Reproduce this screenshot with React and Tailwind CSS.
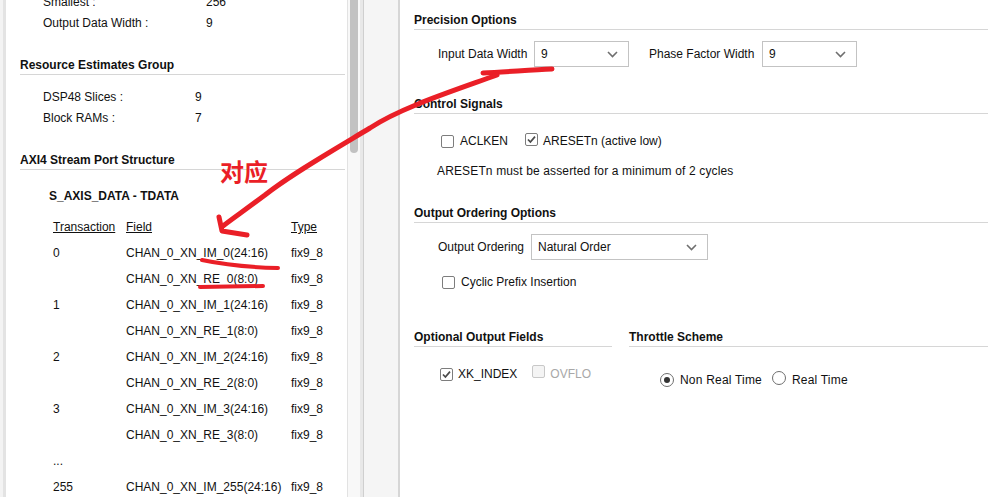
import React from "react";

const font = { fontFamily: '"Liberation Sans", Arial, sans-serif' };

function Check({ checked, disabled }) {
  return (
    <span
      className={
        "inline-flex items-center justify-center w-[13px] h-[13px] rounded-[2px] border shrink-0 " +
        (disabled ? "border-[#c8c8c8] bg-[#f4f4f4]" : "border-[#7d7d7d] bg-white")
      }
    >
      {checked && (
        <svg width="11" height="11" viewBox="0 0 11 11">
          <path d="M2 5.5 L4.4 8 L9 2.6" fill="none" stroke="#4a4a4a" strokeWidth="1.7" />
        </svg>
      )}
    </span>
  );
}

function Radio({ checked }) {
  return (
    <span className="inline-flex items-center justify-center w-[14px] h-[14px] rounded-full border border-[#6e6e6e] bg-white shrink-0">
      {checked && <span className="w-[6px] h-[6px] rounded-full bg-[#333]" />}
    </span>
  );
}

function Chevron() {
  return (
    <svg width="11" height="7" viewBox="0 0 11 7">
      <path d="M1 1 L5.5 5.5 L10 1" fill="none" stroke="#6f6f6f" strokeWidth="1.6" />
    </svg>
  );
}

function Select({ value, w }) {
  return (
    <div
      className={
        "h-[26px] border border-[#c3c3c3] bg-white flex items-center justify-between pl-[6px] pr-[10px] " + w
      }
    >
      <span>{value}</span>
      <Chevron />
    </div>
  );
}

function SectionHead({ children, className = "" }) {
  return (
    <div className={"h-[21px] leading-[22px] font-bold border-b border-[#d6d6d6] " + className}>{children}</div>
  );
}

const rows = [
  ["0", "CHAN_0_XN_IM_0(24:16)"],
  ["", "CHAN_0_XN_RE_0(8:0)"],
  ["1", "CHAN_0_XN_IM_1(24:16)"],
  ["", "CHAN_0_XN_RE_1(8:0)"],
  ["2", "CHAN_0_XN_IM_2(24:16)"],
  ["", "CHAN_0_XN_RE_2(8:0)"],
  ["3", "CHAN_0_XN_IM_3(24:16)"],
  ["", "CHAN_0_XN_RE_3(8:0)"],
];

export default function App() {
  return (
    <div
      className="relative w-[988px] h-[497px] overflow-hidden flex bg-white text-[12px] text-[#111]"
      style={font}
    >
      {/* left border */}
      <div className="w-[3px] h-full bg-[#f3f3f3]" />
      <div className="w-[3px] h-full bg-[#e3e3e3]" />

      {/* left content */}
      <div className="w-[341px] h-full overflow-hidden">
        <div className="-mt-[9px] pl-[14px] pr-[2px]">
          <div className="h-[21px] leading-[22px] flex pl-[23px]">
            <span className="w-[163px]">Smallest :</span>
            <span>256</span>
          </div>
          <div className="h-[21px] leading-[22px] flex pl-[23px]">
            <span className="w-[163px]">Output Data Width :</span>
            <span>9</span>
          </div>
          <SectionHead className="mt-[21px]">Resource Estimates Group</SectionHead>
          <div className="mt-[11px] h-[21px] leading-[22px] flex pl-[23px]">
            <span className="w-[152px]">DSP48 Slices :</span>
            <span>9</span>
          </div>
          <div className="h-[21px] leading-[22px] flex pl-[23px]">
            <span className="w-[152px]">Block RAMs :</span>
            <span>7</span>
          </div>
          <SectionHead className="mt-[21px]">AXI4 Stream Port Structure</SectionHead>
          <div className="mt-[16px] h-[20px] leading-[20px] font-bold pl-[29px]">S_AXIS_DATA - TDATA</div>
          <div className="mt-[8px] pl-[33px]">
            <div className="h-[26px] leading-[26px] flex">
              <span className="w-[73px] underline">Transaction</span>
              <span className="w-[165px] underline">Field</span>
              <span className="underline">Type</span>
            </div>
            {rows.map((r, i) => (
              <div key={i} className="h-[26px] leading-[26px] flex">
                <span className="w-[73px]">{r[0]}</span>
                <span className="w-[165px]">{r[1]}</span>
                <span>fix9_8</span>
              </div>
            ))}
            <div className="h-[27px] leading-[27px] flex">
              <span className="w-[73px]">...</span>
            </div>
            <div className="h-[24px] leading-[24px] flex">
              <span className="w-[73px]">255</span>
              <span className="w-[165px]">CHAN_0_XN_IM_255(24:16)</span>
              <span>fix9_8</span>
            </div>
          </div>
        </div>
      </div>

      {/* scrollbar */}
      <div className="w-[1px] h-full bg-[#e2e2e2]" />
      <div className="w-[12px] h-full bg-[#f8f8f8] flex pl-[2px]">
        <div className="w-[8px] h-[153px] bg-[#c2c2c2] rounded-b-[4px]" />
      </div>
      <div className="w-[3px] h-full bg-[#e8e8e8]" />
      <div className="w-[1px] h-full bg-[#cfcfcf]" />
      <div className="w-[34px] h-full bg-[#f5f5f5]" />
      <div className="w-[2px] h-full bg-[#d6d6d6]" />

      {/* right panel */}
      <div className="flex-1 h-full bg-white pl-[14px]">
        <SectionHead className="mt-[9px]">Precision Options</SectionHead>
        <div className="mt-[11px] flex items-center pl-[24px]">
          <span className="w-[96px]">Input Data Width</span>
          <Select value="9" w="w-[95px]" />
          <span className="ml-[20px] w-[113px]">Phase Factor Width</span>
          <Select value="9" w="w-[95px]" />
        </div>

        <SectionHead className="mt-[26px]">Control Signals</SectionHead>
        <div className="mt-[17px] h-[20px] flex items-center pl-[27px]">
          <Check />
          <span className="ml-[6px]">ACLKEN</span>
          <span className="ml-[17px]">
            <Check checked />
          </span>
          <span className="ml-[5px]">ARESETn (active low)</span>
        </div>
        <div className="mt-[10px] h-[20px] leading-[20px] pl-[23px] tracking-[0.14px]">
          ARESETn must be asserted for a minimum of 2 cycles
        </div>

        <SectionHead className="mt-[21px]">Output Ordering Options</SectionHead>
        <div className="mt-[11px] flex items-center pl-[24px]">
          <span className="w-[93px]">Output Ordering</span>
          <Select value="Natural Order" w="w-[177px]" />
        </div>
        <div className="mt-[12px] h-[20px] flex items-center pl-[28px]">
          <Check />
          <span className="ml-[6px]">Cyclic Prefix Insertion</span>
        </div>

        <div className="mt-[34px] flex">
          <div className="w-[198px]">
            <SectionHead>Optional Output Fields</SectionHead>
            <div className="mt-[17px] h-[20px] flex items-center pl-[26px]">
              <Check checked />
              <span className="ml-[5px]">XK_INDEX</span>
              <span className="ml-[15px]">
                <Check disabled />
              </span>
              <span className="ml-[5px] text-[#a8a8a8]">OVFLO</span>
            </div>
          </div>
          <div className="ml-[17px] flex-1">
            <SectionHead>Throttle Scheme</SectionHead>
            <div className="mt-[23px] h-[20px] flex items-center pl-[31px]">
              <Radio checked />
              <span className="ml-[6px] tracking-[0.2px]">Non Real Time</span>
              <span className="ml-[10px]">
                <Radio />
              </span>
              <span className="ml-[6px] tracking-[0.2px]">Real Time</span>
            </div>
          </div>
        </div>
      </div>

      {/* red annotation overlay */}
      <svg
        className="absolute left-0 top-0 pointer-events-none"
        width="988"
        height="497"
        viewBox="0 0 988 497"
      >
        <g fill="none" stroke="#ea1f27" strokeLinecap="round" strokeLinejoin="round">
          <path d="M552 69 C 530 70, 505 72, 483 73" strokeWidth="5" />
          <path
            d="M497 75 C 450 92, 400 108, 370 128 C 330 152, 290 175, 265 195 C 245 210, 232 219, 223 226"
            strokeWidth="5"
          />
          <path d="M219 217 L 222 231 L 247 235" strokeWidth="5" />
          <path d="M202 260 Q 235 267 278 268" strokeWidth="4" />
          <path d="M200 287 L 263 286" strokeWidth="4" />
        </g>
      </svg>
      <div
        className="absolute left-[220px] top-[157px] text-[24px] leading-[28px] font-bold text-[#ea1f27]"
        style={{ fontFamily: '"Noto Sans CJK SC", sans-serif' }}
      >
        对应
      </div>
    </div>
  );
}
